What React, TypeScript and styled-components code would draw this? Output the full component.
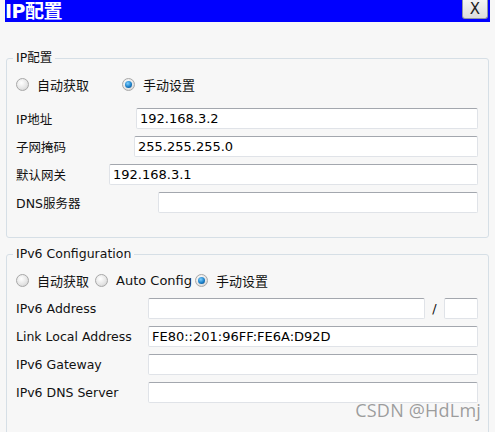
import React from "react";
import styled, { createGlobalStyle } from "styled-components";

const GlobalStyle = createGlobalStyle`
	html, body {
		margin: 0;
		padding: 0;
		background: #f7f7f7;
	}
	body {
		font-family: "DejaVu Sans", "Noto Sans CJK SC", sans-serif;
		color: #111;
	}
`;

const Window = styled.div`
	position: relative;
	width: 495px;
	height: 432px;
	overflow: hidden;
	background: #f7f7f7;
`;

const TitleBar = styled.div`
	display: flex;
	align-items: center;
	justify-content: space-between;
	height: 22px;
	margin: 0 5px;
	background: #0000ff;
`;

const Title = styled.div`
	color: #fff;
	font-family: "DejaVu Sans", "Noto Sans CJK SC", sans-serif;
	font-weight: bold;
	font-size: 19px;
	line-height: 22px;
	letter-spacing: -0.5px;
`;

const CloseButton = styled.div`
	display: flex;
	align-items: center;
	justify-content: center;
	width: 26px;
	height: 19px;
	margin: 0 2px 2px 0;
	align-self: flex-start;
	box-sizing: border-box;
	border: 1px solid #8f96a3;
	border-top: none;
	border-radius: 0 0 3px 3px;
	background: linear-gradient(#f4f4f4, #dcdcdc);
	font-family: "DejaVu Sans", sans-serif;
	font-size: 15px;
	color: #222;
`;

const Content = styled.div`
	padding: 28px 6px 0 6px;
	display: flex;
	flex-direction: column;
	gap: 8px;
`;

const Group = styled.fieldset<{ $bottom: number }>`
	margin: 0;
	padding: 8px 10px ${(p) => p.$bottom}px 9px;
	border: 1px solid #d6dfe6;
	border-radius: 3px;
	display: flex;
	flex-direction: column;
	gap: 7px;
`;

const Legend = styled.legend`
	padding: 0 3px;
	margin-left: -3px;
	font-size: 12.5px;
	line-height: 16px;
	color: #111;
`;

const RadioRow = styled.div<{ $after: number }>`
	display: flex;
	align-items: center;
	height: 20px;
	margin-bottom: ${(p) => p.$after}px;
`;

const RadioItem = styled.label<{ $space?: number }>`
	display: flex;
	align-items: center;
	gap: 8px;
	margin-right: ${(p) => p.$space ?? 0}px;
	font-size: 13px;
	color: #111;
`;

const RadioCircle = styled.span<{ $checked?: boolean }>`
	position: relative;
	width: 11px;
	height: 11px;
	border-radius: 50%;
	border: 1px solid #a8a8a8;
	background: radial-gradient(circle at 40% 35%, #ffffff 0%, #e4e4e4 60%, #c8c8c8 100%);
	&::after {
		content: "";
		display: ${(p) => (p.$checked ? "block" : "none")};
		position: absolute;
		left: 2px;
		top: 2px;
		width: 7px;
		height: 7px;
		border-radius: 50%;
		background: radial-gradient(circle at 40% 35%, #7fd0ff 0%, #1a7fc8 55%, #0a3d73 100%);
	}
`;

const Row = styled.div`
	display: flex;
	align-items: center;
	height: 21px;
`;

const Label = styled.span<{ $width: number }>`
	flex: 0 0 ${(p) => p.$width}px;
	font-size: 12.5px;
	color: #111;
	white-space: nowrap;
`;

const Field = styled.div<{ $width?: number }>`
	flex: ${(p) => (p.$width ? `0 0 ${p.$width}px` : "1 1 auto")};
	height: 21px;
	box-sizing: border-box;
	border: 1px solid #e0e3e8;
	border-top-color: #a3a7ae;
	border-radius: 2px;
	background: #fff;
	padding: 0 3px;
	font-size: 13px;
	line-height: 19px;
	color: #000;
	white-space: nowrap;
	overflow: hidden;
`;

const Slash = styled.span`
	flex: 0 0 19px;
	text-align: center;
	font-size: 13px;
`;

const Watermark = styled.div`
	position: absolute;
	right: 14px;
	bottom: 10px;
	font-family: "Open Sans", "Noto Sans", sans-serif;
	font-size: 18px;
	color: rgba(140, 140, 140, 0.85);
	letter-spacing: 0.2px;
`;

const ipv4Rows = [
	{ label: "IP地址", width: 120, value: "192.168.3.2" },
	{ label: "子网掩码", width: 118, value: "255.255.255.0" },
	{ label: "默认网关", width: 93, value: "192.168.3.1" },
	{ label: "DNS服务器", width: 142, value: "" },
];

const App = () => {
	return (
		<>
			<GlobalStyle />
			<Window>
				<TitleBar>
					<Title>IP配置</Title>
					<CloseButton>X</CloseButton>
				</TitleBar>
				<Content>
					<Group $bottom={24}>
						<Legend>IP配置</Legend>
						<RadioRow $after={7}>
							<RadioItem $space={33}>
								<RadioCircle />
								自动获取
							</RadioItem>
							<RadioItem>
								<RadioCircle $checked />
								手动设置
							</RadioItem>
						</RadioRow>
						{ipv4Rows.map((r) => (
							<Row key={r.label}>
								<Label $width={r.width}>{r.label}</Label>
								<Field>{r.value}</Field>
							</Row>
						))}
					</Group>
					<Group $bottom={60}>
						<Legend>IPv6 Configuration</Legend>
						<RadioRow $after={1}>
							<RadioItem $space={6}>
								<RadioCircle />
								自动获取
							</RadioItem>
							<RadioItem $space={3}>
								<RadioCircle />
								Auto Config
							</RadioItem>
							<RadioItem>
								<RadioCircle $checked />
								手动设置
							</RadioItem>
						</RadioRow>
						<Row>
							<Label $width={132}>IPv6 Address</Label>
							<Field />
							<Slash>/</Slash>
							<Field $width={34} />
						</Row>
						<Row>
							<Label $width={132}>Link Local Address</Label>
							<Field>FE80::201:96FF:FE6A:D92D</Field>
						</Row>
						<Row>
							<Label $width={132}>IPv6 Gateway</Label>
							<Field />
						</Row>
						<Row>
							<Label $width={132}>IPv6 DNS Server</Label>
							<Field />
						</Row>
					</Group>
				</Content>
				<Watermark>CSDN @HdLmj</Watermark>
			</Window>
		</>
	);
};

export default App;
